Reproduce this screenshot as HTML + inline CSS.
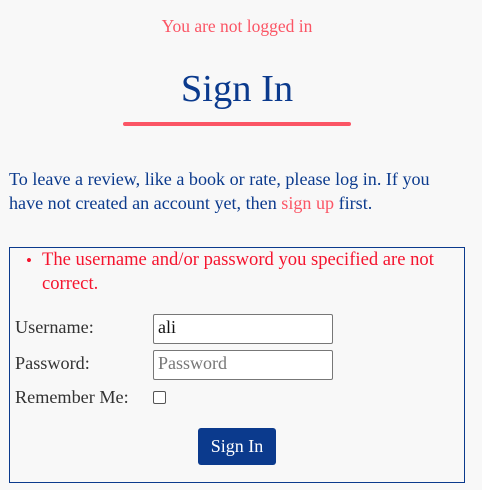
<!DOCTYPE html>
<html><head><style>
body{margin:0;width:482px;height:490px;background:#f8f8f8;font-family:"Liberation Serif",serif;position:relative;overflow:hidden}
.a{position:absolute;white-space:nowrap}
</style></head><body>
<div class="a" style="left:0;width:474px;text-align:center;top:16px;font-size:17.5px;color:#fb5565">You are not logged in</div>
<div class="a" style="left:0;width:474px;text-align:center;top:67px;font-size:38.5px;color:#0b3a8d">Sign In</div>
<div class="a" style="left:123px;top:122px;width:228px;height:4px;border-radius:2px;background:#fb5565"></div>
<div class="a" style="left:9px;top:167px;font-size:18.1px;line-height:24px;color:#0b3a8d">To leave a review, like a book or rate, please log in. If you<br>have not created an account yet, then <span style="color:#fb5565">sign up</span> first.</div>
<div class="a" style="left:9px;top:247px;width:454px;height:234px;border:1px solid #0b3a8d"></div>
<div class="a" style="left:26px;top:249px;font-size:17px;line-height:24px;color:#f5142e">•</div>
<div class="a" style="left:42px;top:248px;font-size:18.6px;line-height:24px;color:#f5142e">The username and/or password you specified are not<br>correct.</div>
<div class="a" style="left:15px;top:317px;font-size:18.2px;color:#333">Username:</div>
<div class="a" style="left:15px;top:353px;font-size:18.2px;color:#333">Password:</div>
<div class="a" style="left:15px;top:387px;font-size:18.2px;color:#333">Remember Me:</div>
<div class="a" style="left:153px;top:314px;width:178px;height:28px;border:1px solid #777;border-radius:2px;background:#fff"></div>
<div class="a" style="left:158px;top:317px;font-size:18px;color:#111">ali</div>
<div class="a" style="left:153px;top:350px;width:178px;height:28px;border:1px solid #777;border-radius:2px;background:#fff"></div>
<div class="a" style="left:158px;top:353px;font-size:18px;color:#777">Password</div>
<div class="a" style="left:153px;top:391px;width:11px;height:11px;border:1px solid #555;border-radius:2px;background:#fff"></div>
<div class="a" style="left:198px;top:428px;width:78px;height:37px;border-radius:3px;background:#0b3a8d;color:#fff;font-size:18px;line-height:37px;text-align:center">Sign In</div>
</body></html>
